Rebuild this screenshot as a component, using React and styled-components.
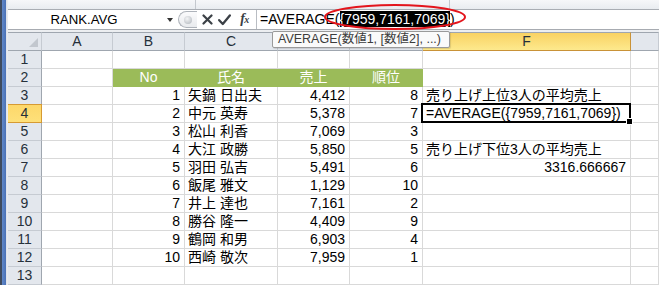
import React from 'react';
import styled, { createGlobalStyle } from 'styled-components';

const Global = createGlobalStyle`
  html, body { margin: 0; padding: 0; background: #fff; }
  body {
    width: 659px; height: 285px; overflow: hidden;
    font-family: "Liberation Sans", "Noto Sans CJK JP", sans-serif;
  }
  * { box-sizing: border-box; }
`;

const Window = styled.div`
  position: relative;
  width: 659px;
  height: 285px;
  display: flex;
  overflow: hidden;
  background: #fff;
`;

const Frame = styled.div`
  width: 8px;
  flex: none;
  background: linear-gradient(to right, #3f4b5e 0, #3f4b5e 2px, #6188c8 2px, #4a71b6 6px, #dde1e8 6px, #eceef2 8px);
`;

const Main = styled.div`
  flex: 1;
  display: flex;
  flex-direction: column;
  min-width: 0;
`;

const TopStrip = styled.div`
  height: 10px;
  display: flex;
  border-bottom: 1px solid #a9adb3;
  background: linear-gradient(#f6f7f9, #e9ecf0);
`;

const StripSeg = styled.div`
  width: ${p => p.$w}px;
  flex: ${p => (p.$w ? 'none' : '1')};
  border-right: ${p => (p.$w ? '1px solid #c4c8ce' : 'none')};
`;

const FormulaBar = styled.div`
  height: 20px;
  display: flex;
  background: #fff;
  border-bottom: 1px solid #a7abb1;
`;

const NameBox = styled.div`
  width: 169px;
  flex: none;
  display: flex;
  align-items: center;
`;

const NameText = styled.div`
  width: 152px;
  text-align: center;
  font-size: 13.2px;
  color: #000;
  line-height: 19px;
`;

const DropArrow = styled.div`
  width: 0;
  height: 0;
  margin-left: 7px;
  border-left: 3.5px solid transparent;
  border-right: 3.5px solid transparent;
  border-top: 4px solid #333;
`;

const Controls = styled.div`
  width: 79px;
  flex: none;
  display: flex;
  align-items: center;
`;

const Grip = styled.div`
  width: 19px;
  height: 17px;
  margin-left: 1px;
  border: 1px solid #aeb3ba;
  border-right: none;
  border-radius: 9px 0 0 9px;
  background: linear-gradient(#fbfbfc, #e9ebee);
  display: flex;
  align-items: center;
  padding-left: 5px;
`;

const GripDot = styled.div`
  width: 8px;
  height: 8px;
  border-radius: 50%;
  background: radial-gradient(circle at 40% 35%, #f4f5f6 0, #c3c7cc 70%, #aab0b7 100%);
`;

const IconBox = styled.div`
  width: ${p => p.$w}px;
  margin-left: ${p => p.$ml}px;
  height: 14px;
  display: flex;
  align-items: center;
  justify-content: center;
`;

const Fx = styled.span`
  font-family: "Liberation Serif", "DejaVu Serif", serif;
  font-style: italic;
  font-weight: bold;
  font-size: 14px;
  color: #3a3f45;
  letter-spacing: -0.5px;
  line-height: 14px;
  & small {
    font-size: 10px;
  }
`;

const FormulaInput = styled.div`
  flex: 1;
  border-left: 1px solid #b9bdc3;
  padding-left: 3px;
  font-size: 14px;
  line-height: 19px;
  white-space: nowrap;
  color: #000;
`;

const Hl = styled.span`
  background: #000;
  color: #fff;
`;

const Gap = styled.div`
  height: 2px;
  background: #eceef1;
`;

const Sheet = styled.div`
  display: grid;
  grid-template-columns: 34px 71px 72px 93px 72px 73px 208px 1fr;
  grid-template-rows: 19px repeat(13, 18px);
  font-size: 14px;
`;

const ColHead = styled.div`
  position: relative;
  border-top: 1px solid #9fa6af;
  border-right: 1px solid ${p => (p.$sel ? '#c99237' : '#c6cbd2')};
  border-bottom: 1px solid ${p => (p.$sel ? '#c99237' : '#9fa6af')};
  background: ${p => (p.$sel ? 'linear-gradient(#f9d263, #fde98d)' : '#e3e7ed')};
  color: #26303a;
  text-align: center;
  line-height: 17px;
  font-size: 14px;
`;

const CornerMark = styled.div`
  position: absolute;
  right: 3px;
  bottom: 3px;
  width: 0;
  height: 0;
  border-left: 9px solid transparent;
  border-bottom: 9px solid #c2c7ce;
`;

const RowHead = styled.div`
  border-right: 1px solid ${p => (p.$sel ? '#d69a33' : '#9fa6af')};
  border-bottom: 1px solid ${p => (p.$sel ? '#d69a33' : '#c6cbd2')};
  border-top: ${p => (p.$sel ? '1px solid #d69a33' : 'none')};
  margin-top: ${p => (p.$sel ? '-1px' : '0')};
  background: ${p => (p.$sel ? 'linear-gradient(#fdd86a, #fee07a)' : '#e3e7ed')};
  color: #26303a;
  text-align: center;
  line-height: 17px;
  font-size: 14px;
`;

const Cell = styled.div`
  position: relative;
  border-right: 1px solid ${p => (p.$green ? '#9bbb59' : '#d9d9d9')};
  border-bottom: 1px solid ${p => (p.$green ? '#9bbb59' : '#d9d9d9')};
  background: ${p => (p.$green ? '#9bbb59' : '#fff')};
  color: ${p => (p.$green ? '#fff' : '#000')};
  text-align: ${p => p.$align || 'left'};
  padding: ${p => (p.$align === 'right' ? '0 4px 0 0' : p.$align === 'center' ? '0' : '0 0 0 3px')};
  line-height: 17px;
  white-space: nowrap;
  z-index: ${p => (p.$active ? 2 : 'auto')};
  ${p =>
    p.$active &&
    `
    &::after {
      content: '';
      position: absolute;
      left: -2px; top: -2px; right: -1px; bottom: -1px;
      border: 2px solid #000;
      pointer-events: none;
    }
    &::before {
      content: '';
      position: absolute;
      right: -3px; bottom: -3px;
      width: 5px; height: 5px;
      background: #000;
      border: 1px solid #fff;
      z-index: 3;
    }
  `}
`;

const Tooltip = styled.div`
  position: absolute;
  left: 272px;
  top: 31px;
  width: 178px;
  height: 17px;
  background: #fafafa;
  border: 1px solid #9a9a9a;
  border-radius: 2px;
  box-shadow: 1px 1px 1px rgba(0, 0, 0, 0.12);
  font-size: 12.5px;
  line-height: 15px;
  color: #3c3c3c;
  padding-left: 5px;
  white-space: nowrap;
  z-index: 5;
`;

const Ellipse = styled.svg`
  position: absolute;
  left: 323px;
  top: 3px;
  z-index: 6;
  overflow: visible;
`;

/* D and E header letters sit under the tooltip in the reference, so they are not shown */
const cols = ['A', 'B', 'C', '', '', 'F', ''];

const data = [
  [1, '矢鍋 日出夫', '4,412', 8],
  [2, '中元 英寿', '5,378', 7],
  [3, '松山 利香', '7,069', 3],
  [4, '大江 政勝', '5,850', 5],
  [5, '羽田 弘吉', '5,491', 6],
  [6, '飯尾 雅文', '1,129', 10],
  [7, '井上 達也', '7,161', 2],
  [8, '勝谷 隆一', '4,409', 9],
  [9, '鶴岡 和男', '6,903', 4],
  [10, '西崎 敬次', '7,959', 1],
];

const fCol = {
  3: { text: '売り上げ上位3人の平均売上' },
  4: { text: '=AVERAGE({7959,7161,7069})', active: true },
  6: { text: '売り上げ下位3人の平均売上' },
  7: { text: '3316.666667', align: 'right' },
};

function Row({ n }) {
  const f = fCol[n] || {};
  let cells;
  if (n === 2) {
    cells = (
      <>
        <Cell />
        <Cell $green $align="center">No</Cell>
        <Cell $green $align="center">氏名</Cell>
        <Cell $green $align="center">売上</Cell>
        <Cell $green $align="center">順位</Cell>
      </>
    );
  } else if (n >= 3 && n <= 12) {
    const d = data[n - 3];
    cells = (
      <>
        <Cell />
        <Cell $align="right">{d[0]}</Cell>
        <Cell>{d[1]}</Cell>
        <Cell $align="right">{d[2]}</Cell>
        <Cell $align="right">{d[3]}</Cell>
      </>
    );
  } else {
    cells = (
      <>
        <Cell />
        <Cell />
        <Cell />
        <Cell />
        <Cell />
      </>
    );
  }
  return (
    <>
      <RowHead $sel={n === 4}>{n}</RowHead>
      {cells}
      <Cell $align={f.align} $active={f.active}>{f.text}</Cell>
      <Cell />
    </>
  );
}

export default function App() {
  return (
    <Window>
      <Global />
      <Frame />
      <Main>
        <TopStrip>
          <StripSeg $w={188} />
          <StripSeg $w={254} />
          <StripSeg />
        </TopStrip>
        <FormulaBar>
          <NameBox>
            <NameText>RANK.AVG</NameText>
            <DropArrow />
          </NameBox>
          <Controls>
            <Grip>
              <GripDot />
            </Grip>
            <IconBox $w={11} $ml={5}>
              <svg width="11" height="11" viewBox="0 0 11 11">
                <path d="M1.5 1.5 L9.5 9.5 M9.5 1.5 L1.5 9.5" stroke="#3b4046" strokeWidth="2.2" strokeLinecap="round" />
              </svg>
            </IconBox>
            <IconBox $w={13} $ml={5}>
              <svg width="13" height="12" viewBox="0 0 13 12">
                <path d="M1.2 6.2 L4.8 10 L11.8 1.5" fill="none" stroke="#3b4046" strokeWidth="2.3" strokeLinecap="round" strokeLinejoin="round" />
              </svg>
            </IconBox>
            <IconBox $w={13} $ml={7}>
              <Fx>
                f<small>x</small>
              </Fx>
            </IconBox>
          </Controls>
          <FormulaInput>
            =AVERAGE(<Hl>{'{7959,7161,7069}'}</Hl>)
          </FormulaInput>
        </FormulaBar>
        <Gap />
        <Sheet>
          <ColHead>
            <CornerMark />
          </ColHead>
          {cols.map((c, i) => (
            <ColHead key={i} $sel={c === 'F'}>
              {c}
            </ColHead>
          ))}
          {Array.from({ length: 13 }, (_, i) => (
            <Row key={i} n={i + 1} />
          ))}
        </Sheet>
      </Main>
      <Tooltip>AVERAGE(数値1, [数値2], ...)</Tooltip>
      <Ellipse width="144" height="28" viewBox="0 0 144 28">
        <ellipse cx="72" cy="14" rx="70" ry="12" fill="none" stroke="#e3151c" strokeWidth="2" />
      </Ellipse>
    </Window>
  );
}
